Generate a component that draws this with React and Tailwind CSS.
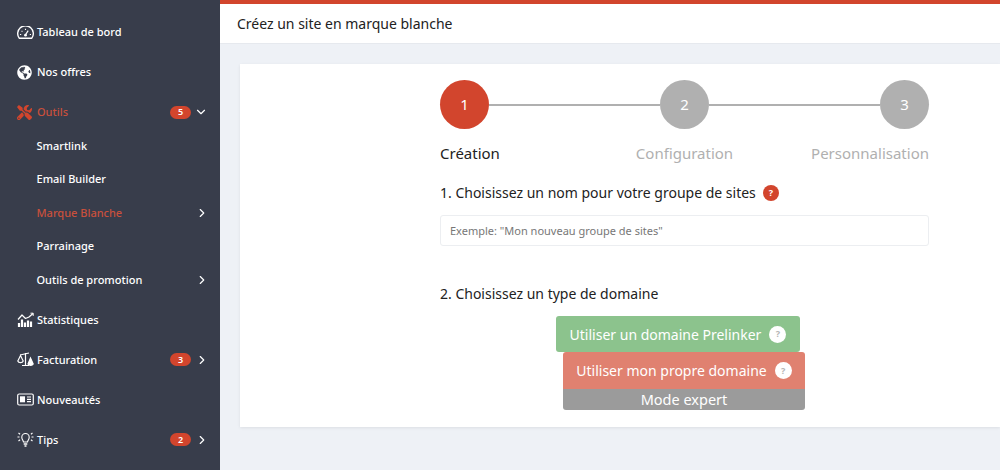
import React from "react";
import { FaTools, FaGlobeAmericas } from "react-icons/fa";
import { ChevronDown, ChevronRight } from "lucide-react";

const font = { fontFamily: '"Noto Sans", sans-serif' };

const GaugeIcon = () => (
  <svg width="17" height="13" viewBox="0 0 17 13" fill="none" stroke="white" strokeWidth="1.4">
    <path d="M2.2 12.2 A7.8 7.8 0 1 1 14.8 12.2 Z" strokeLinejoin="round" />
    <path d="M8.5 8.8 L11.2 4.6" strokeWidth="1.2" />
    <circle cx="8.5" cy="9.2" r="1.4" fill="white" stroke="none" />
    <path d="M3 8.5h1.2M4.6 4.8l.8.8M8.5 2.8v1.2M12.8 8.5h1.2" strokeWidth="1.1" />
  </svg>
);

const StatsIcon = () => (
  <svg width="17" height="16" viewBox="0 0 17 16" fill="none" stroke="white" strokeWidth="1.2">
    <path d="M1 7.5 L5 3 L8.5 6.5 L12 5 L16 1.5" strokeLinejoin="round" />
    <path d="M13.5 1.2h2.7v2.7" strokeWidth="1" />
    <path d="M2 11v4M5 7.5v7.5M8 10.5v4.5M11 8.5v6.5M14 9.5v5.5" strokeWidth="2.2" />
  </svg>
);

const ScaleIcon = () => (
  <svg width="17" height="15" viewBox="0 0 17 15" fill="none" stroke="white" strokeWidth="1.2">
    <path d="M8.5 1v12M5 13.5h7M3 3l9-2" />
    <path d="M0.8 9 L3.5 3.5 L6.2 9 A2.8 2.2 0 0 1 0.8 9 Z" />
    <path d="M11 12 L13.5 6 L16.2 12 A2.8 2.2 0 0 1 11 12 Z" fill="white" />
  </svg>
);

const NewsIcon = () => (
  <svg width="17" height="13" viewBox="0 0 17 13" fill="none" stroke="white" strokeWidth="1.2">
    <rect x="0.7" y="1" width="15.6" height="11" rx="1.5" />
    <rect x="3" y="3.3" width="5" height="6" fill="white" stroke="none" />
    <path d="M10 4h4M10 6.3h4M10 8.6h4" />
  </svg>
);

const BulbIcon = () => (
  <svg width="17" height="17" viewBox="0 0 17 17" fill="none" stroke="white" strokeWidth="1.1">
    <path d="M6.5 11 C6 9 4.8 8.5 4.8 6.2 A3.7 3.7 0 0 1 12.2 6.2 C12.2 8.5 11 9 10.5 11 Z" />
    <path d="M6.7 13h3.6M7.5 15h2" strokeWidth="1.3" />
    <path d="M0.5 6h2M14.5 6h2M1.5 2l1.6 1.2M15.5 2l-1.6 1.2M1.5 10l1.6-1.2M15.5 10l-1.6-1.2" />
  </svg>
);

const Badge = ({ n }) => (
  <span className="flex h-[13px] w-[21px] items-center justify-center rounded-full bg-[#d2452d] text-[9px] font-semibold text-white">
    {n}
  </span>
);

const NavItem = ({ icon, label, badge, arrow, active }) => (
  <div className="flex h-10 items-center pl-[17px] pr-[11px]">
    <span className="flex w-[20px] shrink-0 items-center">{icon}</span>
    <span className={`pt-[1px] text-[11px] font-medium ${active ? "text-[#c9503c]" : "text-white"}`}>{label}</span>
    <span className="ml-auto flex items-center gap-[4px]">
      {badge && <Badge n={badge} />}
      {arrow === "down" && <ChevronDown size={14} className="-ml-[1px] mr-[1px] text-white" />}
      {arrow === "right" && <ChevronRight size={14} className="text-white" />}
    </span>
  </div>
);

const SubItem = ({ label, arrow, active }) => (
  <div className="flex h-[33.5px] items-center pl-[36.5px] pr-[11px]">
    <span className={`text-[11px] font-medium ${active ? "text-[#c9503c]" : "text-white"}`}>{label}</span>
    {arrow && <ChevronRight size={14} className="ml-auto text-white" />}
  </div>
);

const Sidebar = () => (
  <aside className="h-[470px] w-[220px] shrink-0 bg-[#383d4b] pt-3">
    <NavItem icon={<GaugeIcon />} label="Tableau de bord" />
    <NavItem icon={<FaGlobeAmericas size={15} className="text-white" />} label="Nos offres" />
    <NavItem icon={<FaTools size={15} className="text-[#d2452d]" />} label="Outils" badge="5" arrow="down" active />
    <div className="-mt-[3px] mb-[3px]">
      <SubItem label="Smartlink" />
      <SubItem label="Email Builder" />
      <SubItem label="Marque Blanche" arrow active />
      <SubItem label="Parrainage" />
      <SubItem label="Outils de promotion" arrow />
    </div>
    <NavItem icon={<StatsIcon />} label="Statistiques" />
    <NavItem icon={<ScaleIcon />} label="Facturation" badge="3" arrow="right" />
    <NavItem icon={<NewsIcon />} label="Nouveautés" />
    <NavItem icon={<BulbIcon />} label="Tips" badge="2" arrow="right" />
  </aside>
);

const Circle = ({ n, active }) => (
  <div
    className={`flex h-[49px] w-[49px] shrink-0 items-center justify-center rounded-full text-[15px] text-white ${
      active ? "bg-[#d2452d]" : "bg-[#b0b0b0]"
    }`}
  >
    {n}
  </div>
);

const Help = ({ color }) =>
  color === "red" ? (
    <span className="flex h-[16px] w-[16px] items-center justify-center rounded-full bg-[#d2452d] text-[9px] font-bold text-white">
      ?
    </span>
  ) : (
    <span className="flex h-[17px] w-[17px] items-center justify-center rounded-full bg-white text-[9px] font-bold text-[#b5b5b5]">
      ?
    </span>
  );

export default function App() {
  return (
    <div className="flex h-[470px] w-[1000px] overflow-hidden bg-[#eef1f6]" style={font}>
      <Sidebar />
      <main className="flex-1">
        <div className="h-[44px] border-t-4 border-b border-t-[#d2452d] border-b-[#e6e9ee] bg-white pl-[17px] pt-[9px] text-[14px] text-[#222]">
          Créez un site en marque blanche
        </div>
        <section className="ml-5 mt-5 h-[363px] bg-white pl-[200px] pr-[71px] pt-4 shadow-[0_1px_3px_rgba(0,0,0,0.08)]">
          <div className="flex items-center">
            <Circle n="1" active />
            <div className="h-[2px] flex-1 bg-[#b0b0b0]" />
            <Circle n="2" />
            <div className="h-[2px] flex-1 bg-[#b0b0b0]" />
            <Circle n="3" />
          </div>
          <div className="mt-[13px] grid grid-cols-3 text-[15px] leading-[22px]">
            <span className="text-[#222]">Création</span>
            <span className="text-center text-[#b0b0b0]">Configuration</span>
            <span className="text-right text-[#b0b0b0]">Personnalisation</span>
          </div>
          <div className="mt-[18px] flex items-center gap-[7px] text-[14px] leading-[22px] text-[#222]">
            1. Choisissez un nom pour votre groupe de sites
            <Help color="red" />
          </div>
          <input
            readOnly
            placeholder='Exemple: "Mon nouveau groupe de sites"'
            className="mt-[11px] h-[31px] w-full rounded-[3px] border border-[#eceef1] px-[9px] text-[11px] text-[#666] outline-none placeholder:text-[#777]"
          />
          <div className="mt-[37px] text-[14px] leading-[22px] text-[#222]">2. Choisissez un type de domaine</div>
          <div className="mt-[11px] flex flex-col items-center">
            <button className="mr-[13px] flex h-[36px] w-[244px] items-center justify-center gap-[8px] rounded-[3px] bg-[#8cc38d] text-[14px] text-white">
              Utiliser un domaine Prelinker <Help />
            </button>
            <button className="mr-[1px] flex h-[37px] w-[242px] items-center justify-center gap-[8px] rounded-t-[3px] bg-[#e08170] text-[14px] text-white">
              Utiliser mon propre domaine <Help />
            </button>
            <button className="mr-[1px] h-[21px] w-[242px] rounded-b-[3px] bg-[#9b9b9b] text-[14.5px] leading-[21px] text-white">
              Mode expert
            </button>
          </div>
        </section>
      </main>
    </div>
  );
}
